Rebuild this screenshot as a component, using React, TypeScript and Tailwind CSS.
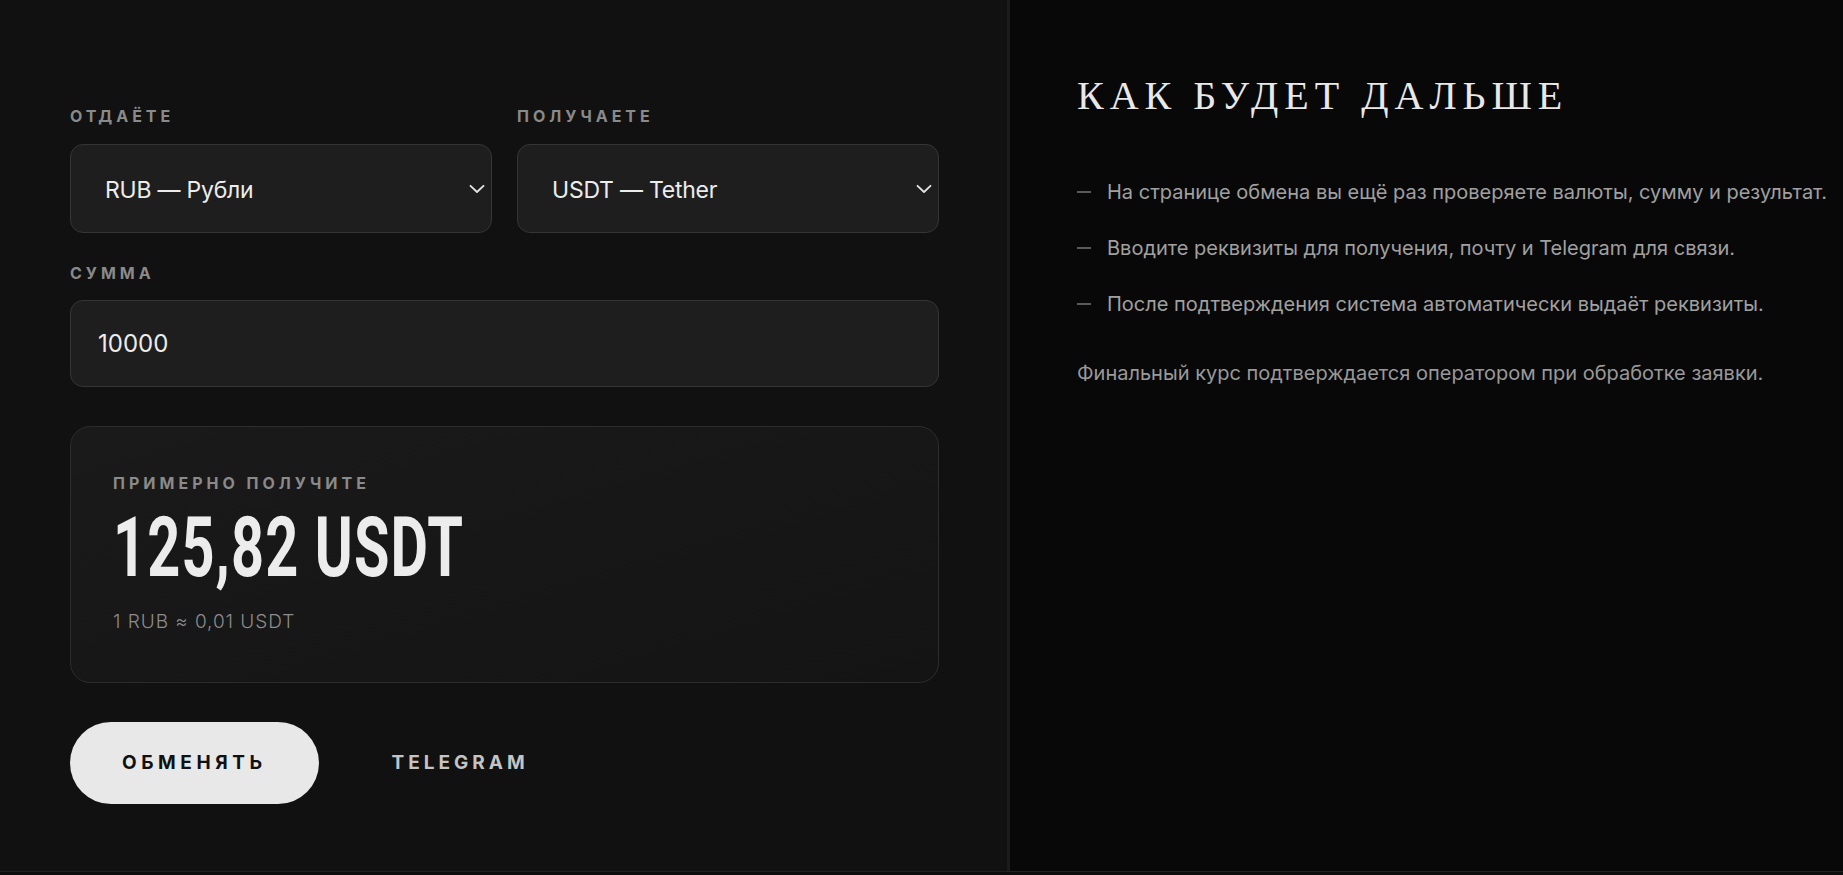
import React from "react";

function Label({ children, className = "" }: { children: React.ReactNode; className?: string }) {
  return (
    <div
      className={
        "font-['Inter',sans-serif] font-bold text-[16px] leading-[20px] tracking-[0.25em] text-[#8a8a8a] " +
        className
      }
    >
      {children}
    </div>
  );
}

function Chevron() {
  return (
    <svg width="16" height="10" viewBox="0 0 16 10" fill="none">
      <path d="M1.5 1.8 L8 8 L14.5 1.8" stroke="#e4e4e4" strokeWidth="1.8" strokeLinecap="round" strokeLinejoin="round" />
    </svg>
  );
}

function SelectField({ label, value }: { label: string; value: string }) {
  return (
    <div>
      <Label>{label}</Label>
      <div className="mt-[18px] h-[89px] rounded-[13px] border border-[#353535] bg-[#1e1e1e] flex items-center justify-between pl-[34px] pr-[6px]">
        <span className="pt-[4px] text-[23px] text-[#ececec] font-['Inter',sans-serif] tracking-[-0.01em]">{value}</span>
        <Chevron />
      </div>
    </div>
  );
}

function Bullet({ children }: { children: React.ReactNode }) {
  return (
    <div className="flex items-center h-[28px]">
      <span className="w-[14px] h-[1.5px] bg-[#5a5a5a] shrink-0" />
      <span className="ml-[16px] text-[20px] leading-[28px] text-[#a0a0a0] whitespace-nowrap">{children}</span>
    </div>
  );
}

export default function App() {
  return (
    <div className="w-[1843px] h-[875px] bg-[#0d0d0d] overflow-hidden font-['Inter',sans-serif]">
      <div className="flex h-[872px] border-b border-[#222222]">
        <section className="w-[1007px] shrink-0 bg-[#111111] pl-[70px] pt-[106px]">
          <div className="w-[869px]">
            <div className="grid grid-cols-2 gap-x-[25px]">
              <SelectField label="ОТДАЁТЕ" value="RUB — Рубли" />
              <SelectField label="ПОЛУЧАЕТЕ" value="USDT — Tether" />
            </div>
            <Label className="mt-[30px]">СУММА</Label>
            <div className="mt-[17px] h-[87px] rounded-[13px] border border-[#353535] bg-[#1e1e1e] flex items-center pl-[27px] text-[24px] text-[#ececec]">
              10000
            </div>
            <div className="mt-[39px] h-[257px] rounded-[20px] border border-[#2c2c2c] bg-gradient-to-br from-[#1a1a1a] to-[#141414] pl-[42px] pt-[46px]">
              <Label>ПРИМЕРНО ПОЛУЧИТЕ</Label>
              <div className="mt-[13px] h-[83px]">
                <span className="inline-block origin-left scale-x-[0.694] font-['Roboto',sans-serif] font-bold text-[83px] leading-none tracking-[0.02em] text-[#ececec] whitespace-nowrap">
                  125,82 USDT
                </span>
              </div>
              <div className="mt-[21px] text-[19px] leading-[24px] font-light tracking-[0.05em] text-[#8c8c8c]">1 RUB ≈ 0,01 USDT</div>
            </div>
            <div className="mt-[39px] flex items-center gap-[21px]">
              <button className="h-[82px] rounded-full bg-[#e8e8e8] px-[52px] text-[19px] font-bold tracking-[0.24em] text-[#111111]">
                ОБМЕНЯТЬ
              </button>
              <button className="h-[82px] px-[52px] text-[19px] font-bold tracking-[0.21em] text-[#c4c4c4]">
                TELEGRAM
              </button>
            </div>
          </div>
        </section>
        <div className="w-[3px] shrink-0 bg-[#1b1b1b]" />
        <section className="flex-1 bg-[#080808] pl-[67px] pt-[76px]">
          <h2 className="font-['Liberation_Serif',serif] text-[40px] leading-[40px] tracking-[0.15em] text-[#e8e8e8] whitespace-nowrap">
            КАК БУДЕТ ДАЛЬШЕ
          </h2>
          <div className="mt-[62px] flex flex-col gap-[28px]">
            <Bullet>На странице обмена вы ещё раз проверяете валюты, сумму и результат.</Bullet>
            <Bullet>Вводите реквизиты для получения, почту и Telegram для связи.</Bullet>
            <Bullet>После подтверждения система автоматически выдаёт реквизиты.</Bullet>
          </div>
          <p className="mt-[41px] text-[20px] leading-[28px] text-[#999999] whitespace-nowrap">
            Финальный курс подтверждается оператором при обработке заявки.
          </p>
        </section>
      </div>
    </div>
  );
}
